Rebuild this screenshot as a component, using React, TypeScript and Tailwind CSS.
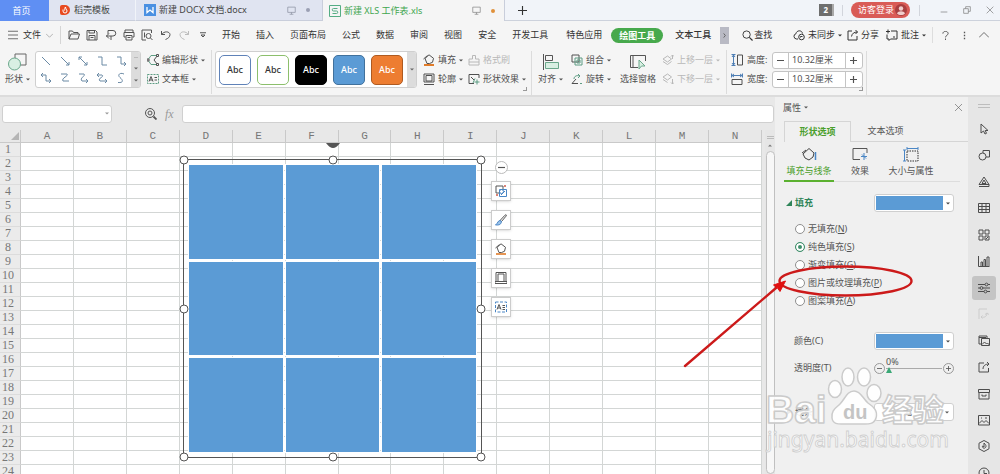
import React, { useState } from 'react';

const BLUE = '#5b9bd5';
const COLUMNS = 'ABCDEFGHIJKLMN'.split('');
const ROWS = Array.from({ length: 24 }, (_, i) => i + 1);

type IconProps = { children: React.ReactNode; className?: string; box?: number };

// Stroke icon on a 12 unit grid
function Icon({ children, className = 'size-3', box = 12 }: IconProps) {
  return (
    <svg
      aria-hidden="true"
      viewBox={`0 0 ${box} ${box}`}
      fill="none"
      stroke="currentColor"
      strokeWidth={1}
      strokeLinejoin="round"
      className={`shrink-0 ${className}`}
    >
      {children}
    </svg>
  );
}

function Caret() {
  return (
    <svg aria-hidden="true" viewBox="0 0 4 3" className="w-1 h-[3px] shrink-0" fill="currentColor">
      <path d="M0 0.5h4L2 2.5z" />
    </svg>
  );
}

const bucket = (
  <>
    <path d="M2 4.500 6 .800l4.500 3.500-1 4-3 1.200H4z" />
    <path d="M.500 5 4.500 1.500" />
  </>
);

function ToolButton({ icon, label, caret, disabled }: { icon: React.ReactNode; label: string; caret?: boolean; disabled?: boolean }) {
  return (
    <button
      type="button"
      disabled={disabled}
      className="flex h-[18px] items-center gap-[3px] whitespace-nowrap disabled:text-[#b8b8b8]"
    >
      {icon}
      {label}
      {caret && <Caret />}
    </button>
  );
}

function TabBar() {
  return (
    <header className="flex h-[21px] shrink-0 bg-[#f1f4f9] text-[#444]">
      <button type="button" className="w-[49px] bg-[#5f8ff3] pr-1.5 text-white">首页</button>
      <button type="button" className="flex w-[87px] items-center gap-1 border-r border-b border-[#c9cedb] border-r-[#f1f4f9] bg-[#e0e4f1] pl-[11px]">
        <svg aria-hidden="true" viewBox="0 0 10 10" className="size-[10px]">
          <path d="M0 2a2 2 0 0 1 2-2h3a5 5 0 0 1 0 10H2a2 2 0 0 1-2-2z" fill="#e8491f" />
          <path d="M3 4.500v1.500a2 2 0 0 0 4 0C7 4.500 5.500 4 5.500 2 4.500 3 5 4.500 4.500 5.500" fill="none" stroke="#fff" />
        </svg>
        稻壳模板
      </button>
      <button type="button" className="flex w-[187px] items-center border-r border-b border-[#c9cedb] bg-[#e0e4f1] pl-2">
        <svg aria-hidden="true" viewBox="0 0 12 12" className="mr-[3px] size-3">
          <path d="M0 0h12v12H0z" fill="#4a90e2" />
          <path d="M3 3v5.500L6 6l3 2.500V3" fill="none" stroke="#fff" strokeWidth="1.300" />
        </svg>
        新建 DOCX 文档.docx
        <Icon className="mr-[10px] ml-auto size-[9px] text-[#8d93a3]"><path d="M1 1.500h10v7H1zM6 8.500V11M3.500 11h5" /></Icon>
        <span className="mr-3 size-1 rounded-full bg-[#9ba0b4]" />
      </button>
      <button type="button" className="flex w-[182px] items-center border-r border-[#c9cedb] bg-[#f5f5f5] pl-1.5 text-[#3fa650]">
        <svg aria-hidden="true" viewBox="0 0 12 12" className="mr-[3px] size-3" fill="none" stroke="#55ad84">
          <path d="M.5.500h11v11H.500zM8.500 3.500H4.500a1.200 1.200 0 0 0 0 2.500h3a1.200 1.200 0 0 1 0 2.500h-4" />
        </svg>
        新建 XLS 工作表.xls
        <Icon className="mr-[10px] ml-auto size-[9px] text-[#888]"><path d="M1 1.500h10v7H1zM6 8.500V11M3.500 11h5" /></Icon>
        <span className="mr-[9px] size-1 rounded-full bg-[#e0913a]" />
      </button>
      <div className="flex flex-1 items-center border-b border-[#cdd2dc] pl-[13px]">
        <button type="button" aria-label="新建标签">
          <Icon className="size-[9px] text-[#333]"><path d="M6 0v12M0 6h12" strokeWidth="1.500" /></Icon>
        </button>
        <span className="ml-auto flex h-3 items-center border-r-2 border-[#a9a9a9] bg-[#6e6e6e] px-1 text-[8px] font-bold text-white">2</span>
        <span className="ml-2 h-[11px] w-px bg-[#d2d5dc]" />
        <button type="button" className="ml-2 flex h-4 w-[59px] items-center justify-between rounded-full bg-[#d95b56] pr-[3px] pl-[7px] text-white">
          访客登录
          <svg aria-hidden="true" viewBox="0 0 12 12" className="size-3">
            <circle cx="6" cy="6" r="6" fill="#a83f40" />
            <circle cx="6" cy="4.500" r="2.200" fill="#f1cdcb" />
            <path d="M2 9.500c1-3 7-3 8 0-2 2-6 2-8 0z" fill="#f1cdcb" />
          </svg>
        </button>
        <span className="ml-[9px] h-[11px] w-px bg-[#d2d5dc]" />
        <div className="mr-1.5 ml-5 flex gap-[15px] text-[#777]">
          <button type="button" aria-label="最小化"><Icon className="size-2"><path d="M1 9h10" /></Icon></button>
          <button type="button" aria-label="还原"><Icon className="size-2"><path d="M1 4h7v7H1zM4 4V1h7v7H8" /></Icon></button>
          <button type="button" aria-label="关闭"><Icon className="size-2"><path d="m1 1 10 10M11 1 1 11" /></Icon></button>
        </div>
      </div>
    </header>
  );
}

function MenuBar() {
  return (
    <nav className="flex h-[27px] shrink-0 items-center bg-[#f5f5f5] pt-px whitespace-nowrap text-[#333]">
      <button type="button" className="flex items-center gap-[5px] pl-2">
        <Icon className="size-[10px] text-[#555]"><path d="M0 1.500h12M0 6h12M0 10.500h12" /></Icon>
        文件
        <Icon className="size-[7px] text-[#888]"><path d="m0 3 6 6 6-6" /></Icon>
      </button>
      <span className="mx-[7px] h-[18px] w-px bg-[#d5d5d5]" />
      <div className="flex w-[122px] items-center justify-between text-[#555]">
        <button type="button" aria-label="打开"><Icon><path d="M1 10V2h3.500l1 1.500H10V5M1 10l2-5h8.500l-1.500 5z" /></Icon></button>
        <button type="button" aria-label="保存"><Icon><path d="M1 1.500h8.500L11 3v8H1zM3 1.500V4h5.500V1.500M3 11V6.500h6V11M4.500 8.500h3" /></Icon></button>
        <button type="button" aria-label="输出为PDF"><Icon><path d="M3 5V1.500h5a2.700 2.700 0 0 1 0 5.500H1M4 4.500 1.500 7 4 9.500M6 7v4" /></Icon></button>
        <button type="button" aria-label="打印"><Icon><path d="M2 3.500V1h8v2.500M2.500 8H1V3.500h10V8H9.500M3 6.500h6V11H3zM4.500 8.500h3" /></Icon></button>
        <button type="button" aria-label="打印预览"><Icon><path d="M5 11H1V1h9.500v3M9.500 9l2 2M3.500 3.500v5" /><circle cx="7.500" cy="7" r="2.500" /></Icon></button>
        <button type="button" aria-label="撤销"><Icon><path d="M1.500 2v3.500H5M1.500 5.500C4 2 9.500 2 10 5.500 10 8 8 9.500 5.500 10.500" /></Icon></button>
        <button type="button" aria-label="恢复" disabled className="text-[#bbb]"><Icon><path d="M10.500 2v3.500H7M10.500 5.500C8 2 2.500 2 2 5.500 2 8 4 9.500 6.500 10.500" /></Icon></button>
      </div>
      <button type="button" aria-label="自定义快速访问" className="ml-[10px]">
        <Icon className="size-[6px] text-[#555]"><path d="M0 1.500h12M2 6l4 4 4-4z" strokeWidth="2" /></Icon>
      </button>
      <div className="ml-4 flex gap-4">
        {['开始', '插入', '页面布局', '公式', '数据', '审阅', '视图', '安全', '开发工具'].map((t) => (
          <button key={t} type="button">{t}</button>
        ))}
      </div>
      <button type="button" className="ml-[18px]">特色应用</button>
      <button type="button" className="ml-[9px] h-[15px] rounded-full bg-[#47a94c] px-2 font-bold text-white">绘图工具</button>
      <button type="button" className="ml-[12px] font-medium">文本工具</button>
      <button type="button" aria-label="更多选项卡" className="ml-[9px] flex h-[17px] w-[9px] items-center justify-center bg-[#b9bac4] text-[#555]">
        <Icon className="size-[5px]"><path d="m4 1 4 5-4 5" strokeWidth="2" /></Icon>
      </button>
      <button type="button" className="ml-[13px] flex items-center gap-px">
        <Icon className="size-[11px]"><circle cx="5" cy="5" r="4" /><path d="m8 8 3.500 3.500" strokeWidth="1.300" /></Icon>
        查找
      </button>
      <div className="ml-auto flex items-center">
        <button type="button" className="flex items-center gap-[3px]">
          <Icon><path d="M5 10H3.500A2.700 2.700 0 0 1 3 4.700C3.500 1 9 .8 9.500 4.500" /><circle cx="8.500" cy="8" r="2.800" /><path d="M7.500 8.500v-1h2" /></Icon>
          未同步
          <Caret />
        </button>
        <button type="button" className="ml-[5px] flex items-center gap-[2px]">
          <Icon><path d="M5 2H1v9h9V7M4.500 7.500C5 4.500 7 3 10.500 3M8.500 1l2 2-2 2" /></Icon>
          分享
        </button>
        <button type="button" className="ml-[7px] flex items-center gap-[3px]">
          <Icon><path d="M5 2h6v8H4.500L3 11.500V10H1V5.500M0 2.500h4M2 .500v4M7 8H9" /></Icon>
          批注
          <Caret />
        </button>
        <span className="ml-[6px] h-4 w-px bg-[#ddd]" />
        <div className="mr-[11px] ml-[8px] flex items-center gap-[10px] text-[#555]">
          <button type="button" aria-label="帮助"><Icon className="size-[9px]"><path d="M2.500 3.500c0-4 7-4 7 0 0 2-3.500 2.500-3.500 5M6 10v2" strokeWidth="1.300" /></Icon></button>
          <button type="button" aria-label="更多"><Icon className="size-[9px]"><path d="M6 1v2M6 5v2M6 9v2" strokeWidth="1.800" /></Icon></button>
          <button type="button" aria-label="收起功能区"><Icon className="size-[10px]"><path d="m0 9 6-6 6 6" /></Icon></button>
        </div>
      </div>
    </nav>
  );
}

const LINE_SHAPES = [
  'M2 2l8 8',
  'M2 2l8 8M10 7v3H7',
  'M2 2l8 8M10 7v3H7M2 5V2h3',
  'M2 2h4v8h5',
  'M2 2h4v7h5M9 7l2 2-2 2',
  'M3 1 1 3l2 2M1 3h5v6h5M9 7l2 2-2 2',
  'M2 2h6c2 2-6 4-4 7h6',
  'M2 2h5c2 2-5 4-2 7h6M9 7l2 2-2 2',
  'M3 1 1 3l2 2M1 3h5c3 2-5 3-2 6h7M9 7l2 2-2 2',
  'M9 2C5 0 2 3 5 5.500S9 11 3 10.500',
];

const SWATCHES = [
  'border-[#5f82b8] bg-white text-[#333]',
  'border-[#8cbf6c] bg-white text-[#333]',
  'border-black bg-black text-white',
  'border-[#41719c] bg-[#5b9bd5] text-white',
  'border-[#ae5a21] bg-[#ed7d31] text-white',
];

function SizeField({ id, label, icon }: { id: string; label: string; icon: React.ReactNode }) {
  const [value, setValue] = useState('10.32厘米');
  return (
    <div className="flex h-[18px] items-center">
      {icon}
      <label htmlFor={id} className="w-[29px] pl-1">{label}:</label>
      <div className="flex h-[17px] w-[91px] overflow-hidden rounded-[3px] border border-[#c4c4c4] bg-white">
        <button type="button" aria-label={`减小${label}`} className="w-4 border-r border-[#c4c4c4] pl-1">
          <Icon className="size-[7px]"><path d="M0 6h12" strokeWidth="2" /></Icon>
        </button>
        <input id={id} value={value} onChange={(e) => setValue(e.target.value)} className="min-w-0 flex-1 pl-[3px] outline-none" />
        <button type="button" aria-label={`增大${label}`} className="w-[17px] border-l border-[#c4c4c4] pl-1">
          <Icon className="size-[7px]"><path d="M0 6h12M6 0v12" strokeWidth="2" /></Icon>
        </button>
      </div>
    </div>
  );
}

function Corner() {
  return <span className="mr-[3px] mb-1 size-[4px] self-end border-r border-b border-[#999]" />;
}

function Ribbon() {
  return (
    <section className="flex h-[49px] shrink-0 items-start overflow-hidden border-b-2 border-[#dcdcdc] bg-[#f5f5f5] pt-[3px] whitespace-nowrap text-[#505050]">
      <button type="button" className="flex w-[35px] flex-col items-center">
        <svg aria-hidden="true" viewBox="0 0 19 18" className="mt-[2px] h-[18px] w-[19px]" fill="none">
          <path d="M7 1h11v11H7z" stroke="#666" />
          <circle cx="6.500" cy="11" r="6" fill="#d9efe3" stroke="#6aa78b" />
        </svg>
        <span className="flex items-center gap-[3px]">形状 <Caret /></span>
      </button>
      <div className="flex h-[37px] w-[106px] overflow-hidden rounded-[3px] border border-[#cfcfcf] bg-white">
        <div className="grid flex-1 grid-cols-5 place-items-center px-px text-[#6b8aa5]">
          {LINE_SHAPES.map((d) => (
            <button key={d} type="button" aria-label="线条"><Icon><path d={d} /></Icon></button>
          ))}
        </div>
        <div className="flex w-[9px] flex-col items-center justify-around bg-[#dcdcdc] text-[#666]">
          <span className="h-px w-1 bg-[#bbb]" /><Caret /><Caret />
        </div>
      </div>
      <div className="flex w-[70px] flex-col gap-px pl-[6px]">
        <ToolButton caret label="编辑形状" icon={<Icon><path d="M10.500 1.500H4L1 6l3 4.500h6.500" stroke="#5d9c83" /><path d="M10.500 1.500 7 6l3.500 4.500" /><path d="M9.500.500h2v2h-2zM9.500 9.500h2v2h-2zM0 5h2v2H0z" fill="#f5f5f5" /></Icon>} />
        <ToolButton caret label="文本框" icon={<Icon><path d="M.500 1.500h11v9H.500z" stroke="#5d9c83" strokeDasharray="2 1" /><path d="m2 8.500 2-5 2 5M2.500 7h3M7.500 4.500H10M7.500 7H10" /></Icon>} />
      </div>
      <div className="-mt-px h-[44px] w-px bg-[#dcdcdc]" />
      <div className="ml-[3px] flex h-[37px] w-[202px] overflow-hidden rounded-[3px] border border-[#cfcfcf] bg-white">
        <div className="flex flex-1 items-center gap-[6px] pl-[3px]">
          {SWATCHES.map((s) => (
            <button key={s} type="button" className={`h-[30px] w-8 rounded-[5px] border text-[9px] font-medium ${s}`}>Abc</button>
          ))}
        </div>
        <div className="flex w-[9px] items-center justify-center bg-[#dcdcdc] text-[#666]"><Caret /></div>
      </div>
      <div className="flex w-[50px] flex-col gap-px pl-[6px]">
        <ToolButton caret label="填充" icon={<Icon><g>{bucket}</g><path d="M1 11h10" stroke="#e07b29" strokeWidth="2" /></Icon>} />
        <ToolButton caret label="轮廓" icon={<Icon><path d="M1 1h10v8H1zM3 2.500h6V8H3zM1 11.500h10" /></Icon>} />
      </div>
      <div className="ml-px flex w-[54px] flex-col gap-px">
        <ToolButton disabled label="格式刷" icon={<Icon><path d="M4.500 5V1.500h3V5H11v6H1V5zM1 8h10" /></Icon>} />
        <ToolButton caret label="形状效果" icon={<Icon><path d="M6 10.500H1v-9h10V5M3 4l3 3" /><path d="M7 5.500 5 10M9 6.500v5M6.500 9h5" stroke="#5d9c83" /></Icon>} />
      </div>
      <div className="flex h-[44px] w-[10px] justify-center border-r border-[#dcdcdc]"><Corner /></div>
      <button type="button" className="flex w-[37px] flex-col items-center">
        <svg aria-hidden="true" viewBox="0 0 18 18" className="mt-[2px] size-[18px]" fill="none">
          <path d="M1.500 1v16M3.500 2.500h7v5h-7z" stroke="#555" />
          <path d="M3.500 9.500h13v6h-13z" fill="#d9efe3" stroke="#6aa78b" />
        </svg>
        <span className="flex items-center gap-[3px]">对齐 <Caret /></span>
      </button>
      <div className="flex w-[46px] flex-col gap-px pl-[2px]">
        <ToolButton caret label="组合" icon={<Icon><path d="M1 1h7v7H1z" /><path d="M4 4h7v7H4zM6 6h3v3H6z" stroke="#5d9c83" /></Icon>} />
        <ToolButton caret label="旋转" icon={<Icon><path d="M1 10.500h6M1 10.500 5 6" /><path d="M3 6c0-3 3-4 6-3M7 1l2 2-2 2M9 10.500h2" stroke="#5d9c83" /></Icon>} />
      </div>
      <button type="button" className="ml-[5px] flex w-[36px] flex-col items-center">
        <svg aria-hidden="true" viewBox="0 0 18 18" className="mt-[2px] size-[18px]" fill="none">
          <path d="M9 14.500H1.500v-12h15V8M4 2.500v12" stroke="#555" />
          <path d="m10 7 6 6h-3.500L10 16z" fill="#d9efe3" stroke="#6aa78b" />
        </svg>
        选择窗格
      </button>
      <div className="ml-[6px] flex w-[64px] flex-col gap-px">
        <ToolButton caret disabled label="上移一层" icon={<Icon><path d="m1 5 4.500-3 4 3-4 3zM1 7.500l4.500 3 4-3M10.500 5V1M9 2.500 10.500 1 12 2.500" /></Icon>} />
        <ToolButton caret disabled label="下移一层" icon={<Icon><path d="m1 4 4.500-3 4 3-4 3zM1 6.500l4.500 3M10.500 6v5M9 9.500l1.500 1.500L12 9.500" /></Icon>} />
      </div>
      <div className="-mt-px h-[44px] w-px bg-[#dcdcdc]" />
      <div className="flex flex-col gap-px pl-[4px]">
        <SizeField id="shape-height" label="高度" icon={<Icon><path d="M2.500 1v10M.500 .500h4M.500 11.500h4M1 3l1.500-2L4 3M1 9l1.500 2L4 9" stroke="#4f7fb5" /><path d="M6.500 1h5v10h-5z" /></Icon>} />
        <SizeField id="shape-width" label="宽度" icon={<Icon><path d="M1 2.500h10M.500.500v4M11.500.500v4M3 1 1 2.500 3 4M9 1l2 1.500L9 4" stroke="#4f7fb5" /><path d="M1 6.500h10v5H1z" /></Icon>} />
      </div>
      <div className="-ml-1 flex h-[44px] w-2 border-r border-[#dcdcdc]"><Corner /></div>
    </section>
  );
}

function FormulaBar() {
  return (
    <div className="flex h-[33px] shrink-0 items-center bg-[#e8e8e8] pr-px pl-[2px] text-[#555]">
      <div className="flex h-[18px] w-[110px] items-center rounded-[3px] border border-[#d0d0d0] bg-white pr-[2px] text-[#999]">
        <input aria-label="名称框" className="min-w-0 flex-1 outline-none" />
        <Caret />
      </div>
      <button type="button" aria-label="查找公式" className="ml-[33px]">
        <Icon className="size-3"><circle cx="5" cy="5" r="4.500" /><circle cx="5" cy="5" r="2" /><path d="m8.500 8.500 3 3" strokeWidth="1.800" /></Icon>
      </button>
      <button type="button" aria-label="插入函数" className="ml-2 w-[17px] text-left font-['Liberation_Serif',serif] text-[12px] text-[#999] italic">fx</button>
      <input aria-label="编辑栏" className="h-[18px] min-w-0 flex-1 rounded-[3px] border border-[#d0d0d0] bg-white px-1 outline-none" />
    </div>
  );
}

const HANDLES = [
  'left-0 top-0', 'left-1/2 top-0', 'left-full top-0',
  'left-0 top-1/2', 'left-full top-1/2',
  'left-0 top-full', 'left-1/2 top-full', 'left-full top-full',
];

const FLOATING = [
  { label: '布局选项', art: <><path d="M4 8H1V1h7v3" /><path d="M4.500 4.500h7v7h-7zM6 10l4-4" stroke="#4a86c5" /><circle cx="6.500" cy="6.500" r="2" stroke="#4a86c5" /><path d="M9 1h2M1 10h2M10 0v2M2 9v2" stroke="#d05a4a" /></> },
  { label: '形状样式', art: <><path d="m5 6.500 5-5.300c1-1 2 0 1 1L6.500 7.500z" /><path d="M5 6.500C3 6.500 3 9 .500 11c2 0 5.500.500 6-3.500z" fill="#9cc3ea" stroke="#4a86c5" /></> },
  { label: '形状填充', art: <><g>{bucket}</g><path d="M1 11h10" stroke="#e07b29" strokeWidth="1.600" /></> },
  { label: '形状轮廓', art: <path d="M1 .500h10v9H1zM3 2h6v7.500H3zM0 11.500V9.500h12v2z" /> },
  { label: '文本选项', art: <><path d="M.500 1h11v10H.500z" stroke="#4a86c5" strokeDasharray="3 1.500" /><path d="m2 8.500 2-5 2 5M2.500 7h3M7.500 4.500H10M7.500 6.500H10M7.500 8.500H10" /></> },
];

function Sheet() {
  return (
    <div className="relative flex min-h-0 flex-1 overflow-hidden bg-[#e8e8e8]">
      <div className="min-w-0 flex-1 overflow-hidden">
        <table className="w-full table-fixed border-separate border-spacing-0 bg-white text-center text-[#777]">
          <thead>
            <tr className="bg-[#e8e8e8] font-['Liberation_Mono',monospace] text-[11px] leading-3">
              <th aria-label="全选" className="h-[13px] w-[21px] border-r border-b border-[#c9c9c9] p-0">
                <svg aria-hidden="true" viewBox="0 0 8 8" className="ml-[11px] size-2" fill="#b5b5b5"><path d="M8 0v8H0z" /></svg>
              </th>
              {COLUMNS.map((c) => (
                <th key={c} scope="col" className="h-[13px] border-r border-b border-[#c9c9c9] p-0 font-normal">{c}</th>
              ))}
            </tr>
          </thead>
          <tbody>
            {ROWS.map((r) => (
              <tr key={r}>
                <th scope="row" className="h-[14px] border-r border-b border-[#c9c9c9] border-b-[#dcdcdc] bg-[#ebebeb] p-0 pr-1 font-['Liberation_Serif',serif] text-[12px] leading-[13px] font-normal">{r}</th>
                {COLUMNS.map((c) => (
                  <td key={c} className="border-r border-b border-[#d3d6d5] p-0" />
                ))}
              </tr>
            ))}
          </tbody>
        </table>
      </div>
      <div className="ml-[3px] flex w-[10px] shrink-0 flex-col items-center bg-[#e6e6e6] text-[#777]">
        <span className="mt-[6px] h-[3px] w-[7px] border-y border-[#bbb]" />
        <span className="mt-[5px] rotate-180"><Caret /></span>
        <span className="mt-[4px] w-[9px] flex-1 rounded-full border border-[#c0c0c0] bg-[#f7f7f7]" />
      </div>

      {/* Selected picture grid */}
      <div className="absolute top-[29px] left-[183px] size-[299px] border border-[#555]">
        <div className="grid size-full grid-cols-3 gap-[3px] p-[5px]">
          {Array.from({ length: 9 }, (_, i) => (
            <div key={i} className="bg-[#5b9bd5] outline-1 outline-white" />
          ))}
        </div>
        <svg aria-hidden="true" viewBox="0 0 14 6" className="absolute bottom-full left-1/2 mb-[11px] h-[6px] w-[14px] -translate-x-1/2">
          <path d="M0 0h14C12 3 9 5 7 5S2 3 0 0z" fill="#555" />
        </svg>
        {HANDLES.map((pos) => (
          <span key={pos} className={`absolute size-[9px] -translate-1/2 rounded-full border border-[#555] bg-white ${pos}`} />
        ))}
      </div>

      <div className="absolute top-[31px] left-[491px] flex w-5 flex-col items-center gap-[9px] text-[#555]">
        <button type="button" aria-label="收起" className="mb-[-2px] flex size-[13px] items-center justify-center rounded-full border border-[#bbb] bg-white">
          <Icon className="size-[7px]"><path d="M0 6h12" strokeWidth="2" /></Icon>
        </button>
        {FLOATING.map((f) => (
          <button key={f.label} type="button" aria-label={f.label} className="flex size-5 items-center justify-center border border-[#ccc] bg-white shadow-sm">
            <Icon>{f.art}</Icon>
          </button>
        ))}
      </div>
    </div>
  );
}

const FILLS = [
  ['无填充', 'N'],
  ['纯色填充', 'S'],
  ['渐变填充', 'G'],
  ['图片或纹理填充', 'P'],
  ['图案填充', 'A'],
];

function ColorPicker({ label }: { label: string }) {
  return (
    <button type="button" aria-label={label} aria-haspopup="listbox" className="flex h-[18px] w-20 items-center rounded-[3px] border border-[#cfcfcf] bg-white pl-px text-[#444]">
      <span className="h-[14px] w-[67px]" style={{ background: BLUE }} />
      <span className="flex flex-1 justify-center"><Caret /></span>
    </button>
  );
}

// Hand-drawn highlight plus the site logo, laid over the panel
function Annotations() {
  return (
    <svg aria-hidden="true" viewBox="676 97 324 377" className="pointer-events-none absolute top-0 -left-[100px] h-[377px] w-[324px]">
      <g fill="none" stroke="#cc1a1a" strokeWidth="2.400" strokeLinecap="round">
        <ellipse cx="846.500" cy="281" rx="66" ry="14.500" />
        <path d="M686 366 777 288" />
      </g>
      <path d="m786.500 281-5.500 10.500-2.500-3.500-4-3z" fill="#e01010" stroke="#e01010" />
      <g fill="#fff" fillOpacity="0.900" stroke="#cbcbcb" strokeWidth="1.500" strokeLinejoin="round">
        <ellipse cx="836" cy="389" rx="6.500" ry="8.500" />
        <ellipse cx="849" cy="377" rx="6" ry="9" />
        <ellipse cx="865" cy="377" rx="6.500" ry="9" />
        <ellipse cx="875" cy="393" rx="7" ry="8.500" />
        <path d="M855 391c7 0 9 8 14 12 6 4 10 8 8 15-2 7-9 6-14 6h-17c-6 0-12 1-13-6-1-8 4-10 8-14 5-5 7-13 14-13z" />
        <g className="font-['Liberation_Sans','Noto_Sans_CJK_SC',sans-serif] font-bold">
          <text x="767" y="423" fontSize="39">Bai</text>
          <text x="883" y="421" fontSize="31">经验</text>
        </g>
      </g>
      <text x="844" y="419" fontSize="20" fill="#c4c4c4" className="font-['Liberation_Sans',sans-serif] font-bold">du</text>
      <text x="768" y="447" fontSize="21" fill="#fff" stroke="#cfcfcf" strokeWidth="0.900" className="font-['Noto_Sans',sans-serif]">jingyan.baidu.com</text>
    </svg>
  );
}

function PropertiesPanel() {
  const [fill, setFill] = useState('S');
  const [opacity, setOpacity] = useState(0);
  return (
    <aside className="relative flex w-[193px] shrink-0 flex-col bg-[#f0f0f0] text-[#555]">
      <div className="flex h-6 items-center justify-between pr-[6px] pb-[3px] pl-2">
        <button type="button" className="flex items-center gap-[3px]">属性 <Caret /></button>
        <button type="button" aria-label="关闭面板"><Icon className="size-[7px]"><path d="m0 0 12 12M12 0 0 12" /></Icon></button>
      </div>
      <div role="tablist" className="flex h-[21px] pl-[9px]">
        <button role="tab" aria-selected="true" type="button" className="w-[67px] border border-b-0 border-[#d5d5d5] font-bold text-[#4a9e2b]">形状选项</button>
        <button role="tab" aria-selected="false" type="button" className="flex-1 border-b border-[#d5d5d5] pr-[48px]">文本选项</button>
      </div>
      <div className="mr-[8px] ml-[9px] flex h-[40px] gap-[7px] border-b border-[#ddd] pt-[5px]">
        <button type="button" className="-mb-px flex w-[50px] flex-col items-center justify-between border-b-2 border-[#5bb130] pb-px text-[#4a9e2b]">
          <svg aria-hidden="true" viewBox="0 0 16 15" className="h-[15px] w-4" fill="none">
            <path d="m2 7 6-5.500L13 6l-1 4-4 3-4-2zM1 6l4-3" stroke="#444" />
            <path d="M14.500 5v8" stroke="#4a86c5" strokeWidth="1.500" />
          </svg>
          填充与线条
        </button>
        <button type="button" className="flex w-[38px] flex-col items-center justify-between pb-[2px]">
          <svg aria-hidden="true" viewBox="0 0 16 15" className="h-[15px] w-4" fill="none">
            <path d="M8 12.500H1v-11h14V6" stroke="#555" />
            <path d="M12 6v7M9 9.500h6M10 7.500l4 4" stroke="#4a86c5" />
          </svg>
          效果
        </button>
        <button type="button" className="flex w-[50px] flex-col items-center justify-between pb-[2px]">
          <svg aria-hidden="true" viewBox="0 0 16 15" className="h-[15px] w-4" fill="none">
            <path d="M4 4h11v10H4z" stroke="#333" strokeDasharray="1.500 1" />
            <path d="M1.500 3v11M4 1.500h11M0 3h3M0 14h3M4 0v3M15 0v3" stroke="#4a86c5" />
          </svg>
          大小与属性
        </button>
      </div>

      <div className="flex flex-col pr-[14px] pl-[11px]">
        <div className="mt-[12px] flex h-[18px] items-center justify-between">
          <h2 className="flex items-center gap-[3px] font-bold text-[#2f8559]">
            <svg aria-hidden="true" viewBox="0 0 6 6" className="size-[6px]" fill="currentColor"><path d="M6 0v6H0z" /></svg>
            填充
          </h2>
          <ColorPicker label="填充预设" />
        </div>
        <fieldset className="mt-2 flex flex-col pl-[9px]">
          {FILLS.map(([name, key]) => (
            <label key={key} className="flex h-[18px] items-center gap-[3px]">
              <input
                type="radio"
                name="fill"
                checked={fill === key}
                onChange={() => setFill(key)}
                className="size-[10px] appearance-none rounded-full border border-[#8f8f8f] bg-white checked:border-[#3f8f6b] checked:bg-[#3f8f6b] checked:shadow-[inset_0_0_0_2px_#fff]"
              />
              <span>{name}(<u>{key}</u>)</span>
            </label>
          ))}
        </fieldset>
        <div className="mt-[22px] flex h-[18px] items-center justify-between pl-[8px]">
          <span>颜色(C)</span>
          <ColorPicker label="颜色" />
        </div>
        <div className="mt-[9px] flex h-[18px] items-center pl-[8px]">
          <label htmlFor="opacity" className="flex-1">透明度(T)</label>
          <button type="button" aria-label="降低透明度" className="flex size-[11px] items-center justify-center rounded-full border border-[#999]">
            <Icon className="size-[5px]"><path d="M0 6h12" strokeWidth="2" /></Icon>
          </button>
          <div className="relative mx-px flex h-[18px] w-[56px] items-center">
            <output htmlFor="opacity" className="absolute -top-[3px] left-0 leading-3">{opacity}%</output>
            <input
              id="opacity"
              type="range"
              value={opacity}
              onChange={(e) => setOpacity(Number(e.target.value))}
              className="h-px w-full appearance-none bg-[#aaa] [&::-webkit-slider-thumb]:mt-1 [&::-webkit-slider-thumb]:size-[6px] [&::-webkit-slider-thumb]:appearance-none [&::-webkit-slider-thumb]:bg-[#3aa876] [&::-webkit-slider-thumb]:[clip-path:polygon(50%_0,100%_100%,0_100%)]"
            />
          </div>
          <button type="button" aria-label="提高透明度" className="flex size-[11px] items-center justify-center rounded-full border border-[#999]">
            <Icon className="size-[5px]"><path d="M0 6h12M6 0v12" strokeWidth="2" /></Icon>
          </button>
        </div>
        <div className="mt-[26px] flex h-[18px] items-center justify-between">
          <label htmlFor="line" className="flex items-center gap-[3px]">
            <svg aria-hidden="true" viewBox="0 0 6 6" className="size-[6px]" fill="currentColor"><path d="m1 0 4 3-4 3z" /></svg>
            线条
          </label>
          <div className="flex h-[18px] w-20 items-center rounded-[3px] border border-[#cfcfcf] bg-white pr-1">
            <select id="line" className="min-w-0 flex-1 appearance-none pl-7 outline-none"><option>无</option></select>
            <Caret />
          </div>
        </div>
      </div>
      <Annotations />
    </aside>
  );
}

const RAIL = [
  { label: '选择', art: <path d="M3 1v9l2.500-2L7 11l1.500-.7L7.200 7.500H10z" /> },
  { label: '形状', art: <><path d="M5 4V1.500h6.500V8H8" /><circle cx="4.500" cy="7.500" r="3.500" /></> },
  { label: '艺术字', art: <path d="M6 1 1 8.500h10zM6 4 4 7.500h4zM1 10.500h10V8.500" /> },
  { label: '表格', art: <path d="M.500 1.500h11v9H.500zM.500 4.500h11M.500 7.500h11M4 1.500v9M8 1.500v9" /> },
  { label: '组件', art: <path d="M1 1h4v4H1zM7 1h4v4H7zM1 7h4v4H1zM7 7h4v4H7zM8 10l2-2" /> },
  { label: '图表', art: <path d="M.500 1v10.500h11M3 11V7h1.500v4M6 11V4.500h1.500V11M9 11V2h2v9" /> },
  { label: '属性', art: <><path d="M0 2.500h7M10 2.500h2M0 6h2M5 6h7M0 9.500h6M9 9.500h3" /><circle cx="8.500" cy="2.500" r="1.400" /><circle cx="3.500" cy="6" r="1.400" /><circle cx="7.500" cy="9.500" r="1.400" /></> },
  { label: '数据', art: <path d="M1 11V1h8M3 9c4 1 6-1 6-4M7 6.500 9 5l2 1.500M4.500 7.500 3 9l1.500 1.500" /> },
  { label: '素材', art: <path d="M3 9H1V1h8v2M3.500 3.500h8v7h-8zM4 9.500 6.500 7l2 2 1-1 2 2M1 2.500h7" /> },
  { label: '分享', art: <path d="M6 2H1v9h9.500V7M5 8c0-3 2-5 6-5M9 1l2 2-2 2" /> },
  { label: '归档', art: <path d="M.500 1.500h11v3H.500zM1 4.500v6.500h10V4.500M4 6.500V8h4V6.500" /> },
  { label: '图片', art: <path d="M.500 1.500h11v9.500H.500zM1 9.500 4 6.500l2 2 2-2 3 3M3 4h1M7 4h2" /> },
  { label: '会员', art: <><path d="m6 .500 5 2.700v5.600l-5 2.700-5-2.700V3.200z" /><path d="M6 3c2 2 2.500 3 1.500 4.500-1 1.500-3.500.500-3-1.500l1.500 1z" /></> },
  { label: '历史', art: <><circle cx="6" cy="6" r="5" /><path d="M6 3v3.500h3" /></> },
];

function SideRail() {
  return (
    <nav className="flex w-8 shrink-0 flex-col items-center overflow-hidden bg-[#e6e6e6] text-[#4c4c4c]">
      <span className="mt-[7px] h-1 w-3 shrink-0 border-y border-[#bdbdbd]" />
      <div className="mt-[9px] -mb-[11px] flex flex-1 flex-col justify-between">
        {RAIL.map((r, i) => (
          <button
            key={r.label}
            type="button"
            aria-label={r.label}
            disabled={i === 7}
            className={`flex size-6 shrink-0 items-center justify-center rounded-[3px] disabled:text-[#ccc] ${i === 6 ? 'bg-[#c4c4c4]' : ''}`}
          >
            <Icon>{r.art}</Icon>
          </button>
        ))}
      </div>
    </nav>
  );
}

export default function App() {
  return (
    <div className="flex h-screen flex-col overflow-hidden bg-[#f5f5f5] font-['Noto_Sans','Noto_Sans_CJK_SC',sans-serif] text-[9px] leading-4">
      <TabBar />
      <MenuBar />
      <Ribbon />
      <main className="flex min-h-0 flex-1">
        <div className="flex min-w-0 flex-1 flex-col">
          <FormulaBar />
          <Sheet />
        </div>
        <PropertiesPanel />
        <SideRail />
      </main>
    </div>
  );
}
